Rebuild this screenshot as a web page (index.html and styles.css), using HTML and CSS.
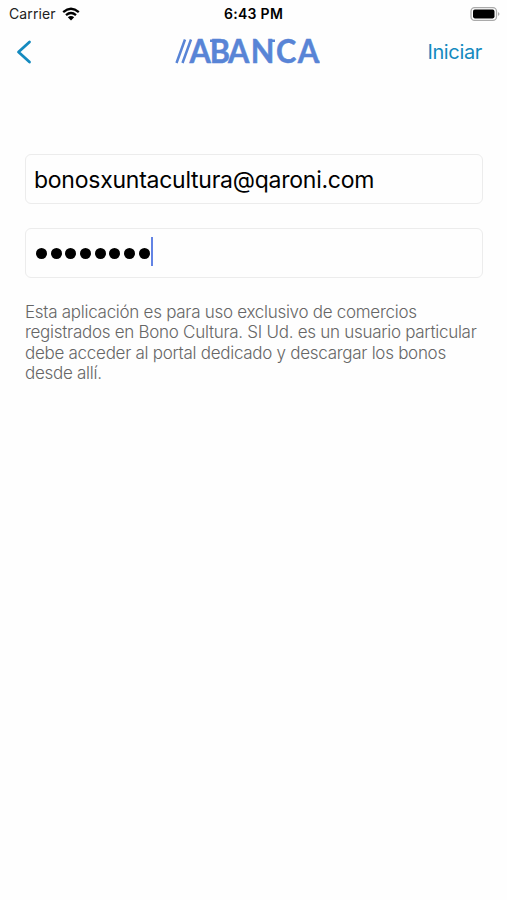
FILE: index.html
```html
<!DOCTYPE html>
<html lang="es">
<head>
    <meta charset="utf-8">
    <title>Abanca</title>
    <link rel="stylesheet" href="styles.css">
</head>
<body>
    <div class="status-bar">
        <div class="carrier">
            <span>Carrier</span>
            <svg class="wifi" width="18" height="14" viewBox="0 0 18 14">
                <path d="M1.2 5.2Q9-1.6 16.8 5.2M4 8.2Q9 3.9 14 8.2" fill="none" stroke="#000" stroke-width="2.3"/>
                <path d="M5.8 10.3Q9 7.7 12.2 10.3L9 13.6Z" fill="#000"/>
            </svg>
        </div>
        <div class="time">6:43 PM</div>
        <div class="battery">
            <svg width="30" height="16" viewBox="0 0 30 16">
                <rect x="1" y="1.6" width="25.5" height="12.8" rx="3.6" fill="#fff" stroke="#aaa" stroke-width="1.3"/>
                <rect x="3" y="3.6" width="21.5" height="8.8" rx="1.8" fill="#000"/>
                <path d="M28 6Q31 8 28 10Z" fill="#aaa"/>
            </svg>
        </div>
    </div>

    <div class="nav-bar">
        <a class="back" href="#" aria-label="Volver">
            <svg width="16" height="24" viewBox="0 0 16 24">
                <path d="M13.5 2L2.5 12L13.5 22" fill="none" stroke="#148abf" stroke-width="2.8" stroke-linecap="round" stroke-linejoin="round"/>
            </svg>
        </a>
        <svg class="logo" width="156" height="42" viewBox="-5 -7 156 42">
            <path d="M1.5 25L10 1.5M7.5 25L16 1.5" fill="none" stroke="#5884d6" stroke-width="2.5"/>
            <text transform="scale(0.93 1)" y="25" x="15.5 37.5 57 81.5 108.5 132">ABANCA</text>
            <path d="M35 2.7h5M96 2.7h4M141 23.7h3.5" fill="none" stroke="#5884d6" stroke-width="2.6"/>
        </svg>
        <a class="start" href="#">Iniciar</a>
    </div>

    <div class="login-form">
        <div class="field">
            <span class="email">bonosxuntacultura@qaroni.com</span>
        </div>
        <div class="field">
            <div class="dots">
                <i></i><i></i><i></i><i></i><i></i><i></i><i></i><i></i>
            </div>
            <span class="caret"></span>
        </div>
        <p class="notice">
            Esta aplicación es para uso exclusivo de comercios<br>
            registrados en Bono Cultura. SI Ud. es un usuario particular<br>
            debe acceder al portal dedicado y descargar los bonos<br>
            desde allí.
        </p>
    </div>
</body>
</html>
```

FILE: styles.css
```css
* {
    box-sizing: border-box;
}

body {
    margin: 0;
    min-height: 900px;
    background-color: #fefefe;
    font-family: 'Inter', 'Liberation Sans', sans-serif;
    color: #000;
}

a {
    text-decoration: none;
}

svg {
    display: block;
}

.status-bar {
    display: grid;
    grid-template-columns: 1fr auto 1fr;
    align-items: center;
    height: 27px;
    padding: 0 7px 0 9px;
    font-size: 14px;
}

.carrier {
    display: flex;
    align-items: center;
    gap: 6px;
    color: #222;
}

.carrier span {
    letter-spacing: 0.1px;
}

.time {
    margin-right: 2px;
    font-weight: 600;
    letter-spacing: 0.3px;
}

.battery {
    display: flex;
    justify-content: flex-end;
}

.nav-bar {
    display: grid;
    grid-template-columns: 154px 156px 1fr;
    align-items: center;
    height: 50px;
    padding: 0 25px 0 16px;
}

.logo text {
    font-family: 'Lato', sans-serif;
    font-size: 33px;
    font-weight: 700;
    fill: #5884d6;
    stroke: #5884d6;
    stroke-width: 0.5px;
}

.start {
    justify-self: end;
    font-size: 20px;
    letter-spacing: -0.35px;
    color: #148abf;
}

.login-form {
    padding: 77px 24px 0 25px;
}

.field {
    display: flex;
    align-items: center;
    height: 50px;
    margin-bottom: 24px;
    padding: 0 8px;
    border: 1px solid #ececec;
    border-radius: 6px;
}

.email {
    padding-top: 2px;
    font-size: 23px;
    letter-spacing: -0.25px;
}

.dots {
    display: flex;
    gap: 3.7px;
    padding-left: 2px;
}

.dots i {
    width: 11px;
    height: 11px;
    border-radius: 50%;
    background-color: #000;
}

.caret {
    width: 2px;
    height: 29px;
    margin-top: -4px;
    margin-left: 1px;
    background-color: #6283e4;
}

.notice {
    margin: 0;
    font-size: 17px;
    font-weight: 300;
    line-height: 20.3px;
    letter-spacing: -0.28px;
    white-space: nowrap;
    color: #666;
}
```
